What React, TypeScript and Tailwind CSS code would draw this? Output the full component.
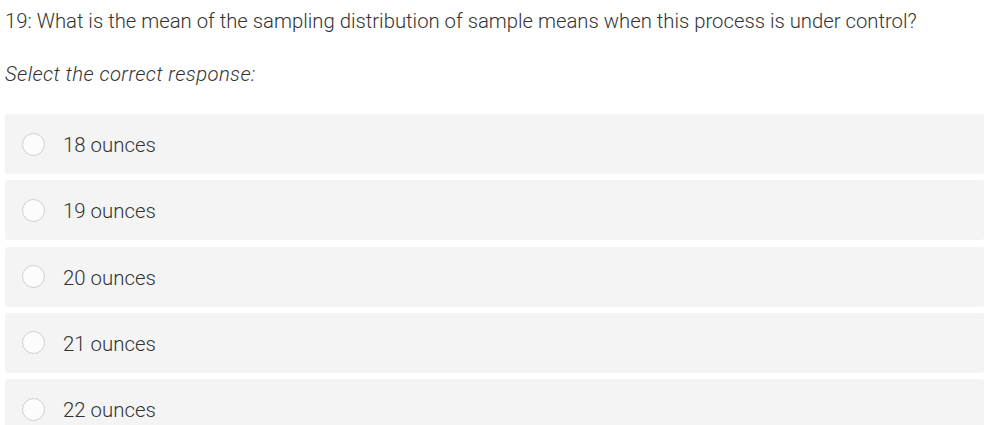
const options = ['18 ounces', '19 ounces', '20 ounces', '21 ounces', '22 ounces'];

export default function App() {
  return (
    <div className="w-[984px] h-[425px] overflow-hidden bg-white font-['Roboto',sans-serif] font-light text-[#333]">
      <div className="pl-[5px] pt-[9px] text-[20.3px] leading-[24px]">
        19: What is the mean of the sampling distribution of sample means when this process is under control?
      </div>
      <div className="pl-[5px] mt-[29px] text-[20.3px] leading-[24px] italic tracking-[0.4px]">Select the correct response:</div>

      <div className="mt-[28px] ml-[5px] flex flex-col gap-[6.25px]">
        {options.map((o) => (
          <div key={o} className="h-[60px] shrink-0 bg-[#f4f4f4] rounded-[3px] flex items-center pl-[17px]">
            <span className="w-[23px] h-[23px] rounded-full border border-[#cfcfcf] bg-[#fcfcfc] shrink-0" />
            <span className="ml-[18px] pt-[2px] text-[20.4px] leading-[24px]">{o}</span>
          </div>
        ))}
      </div>
    </div>
  );
}
